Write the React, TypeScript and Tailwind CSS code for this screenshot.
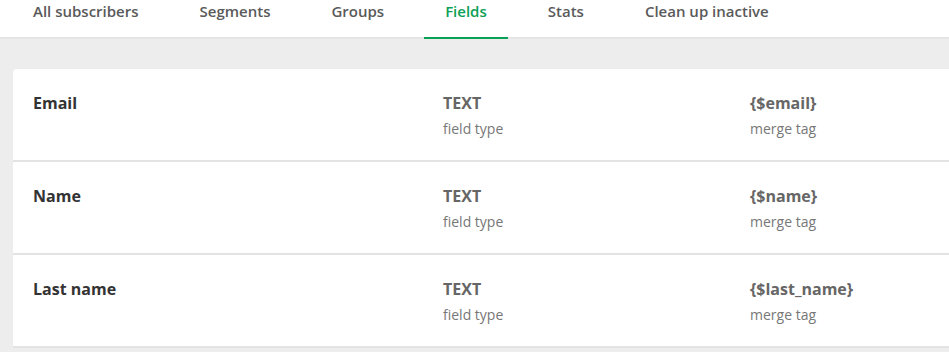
const tabs = ["All subscribers", "Segments", "Groups", "Fields", "Stats", "Clean up inactive"];

const fields = [
  { name: "Email", type: "TEXT", tag: "{$email}" },
  { name: "Name", type: "TEXT", tag: "{$name}" },
  { name: "Last name", type: "TEXT", tag: "{$last_name}" },
];

export default function App() {
  return (
    <div className="min-h-screen bg-[#ededed] font-['Open_Sans',sans-serif]">
      <nav className="flex h-[39px] gap-[19px] bg-white border-b-2 border-[#e4e4e4] pl-[12px]">
        {tabs.map((tab) => {
          const active = tab === "Fields";
          return (
            <div
              key={tab}
              className={
                active
                  ? "-mb-[2px] flex h-[39px] items-start border-b-2 border-[#0aa055] px-[21px] text-[15px] font-semibold text-[#0aa055]"
                  : "-mb-[2px] flex h-[39px] items-start px-[21px] text-[15px] font-semibold text-[#5a5a5a]"
              }
            >
              {tab}
            </div>
          );
        })}
      </nav>

      <div className="pt-[30px] pl-[13px]">
        <div className="rounded-tl-[4px] bg-white">
          {fields.map((field) => (
            <div key={field.name} className="flex h-[93px] border-b-2 border-[#e3e3e3] pl-[20px] pt-[22px]">
              <div className="w-[410px] text-[16px] font-bold text-[#333]">{field.name}</div>
              <div className="w-[307px]">
                <div className="text-[16px] font-bold text-[#666]">{field.type}</div>
                <div className="mt-[3px] text-[14px] text-[#777]">field type</div>
              </div>
              <div>
                <div className="text-[16px] font-bold text-[#666]">{field.tag}</div>
                <div className="mt-[3px] text-[14px] text-[#777]">merge tag</div>
              </div>
            </div>
          ))}
        </div>
      </div>
    </div>
  );
}
